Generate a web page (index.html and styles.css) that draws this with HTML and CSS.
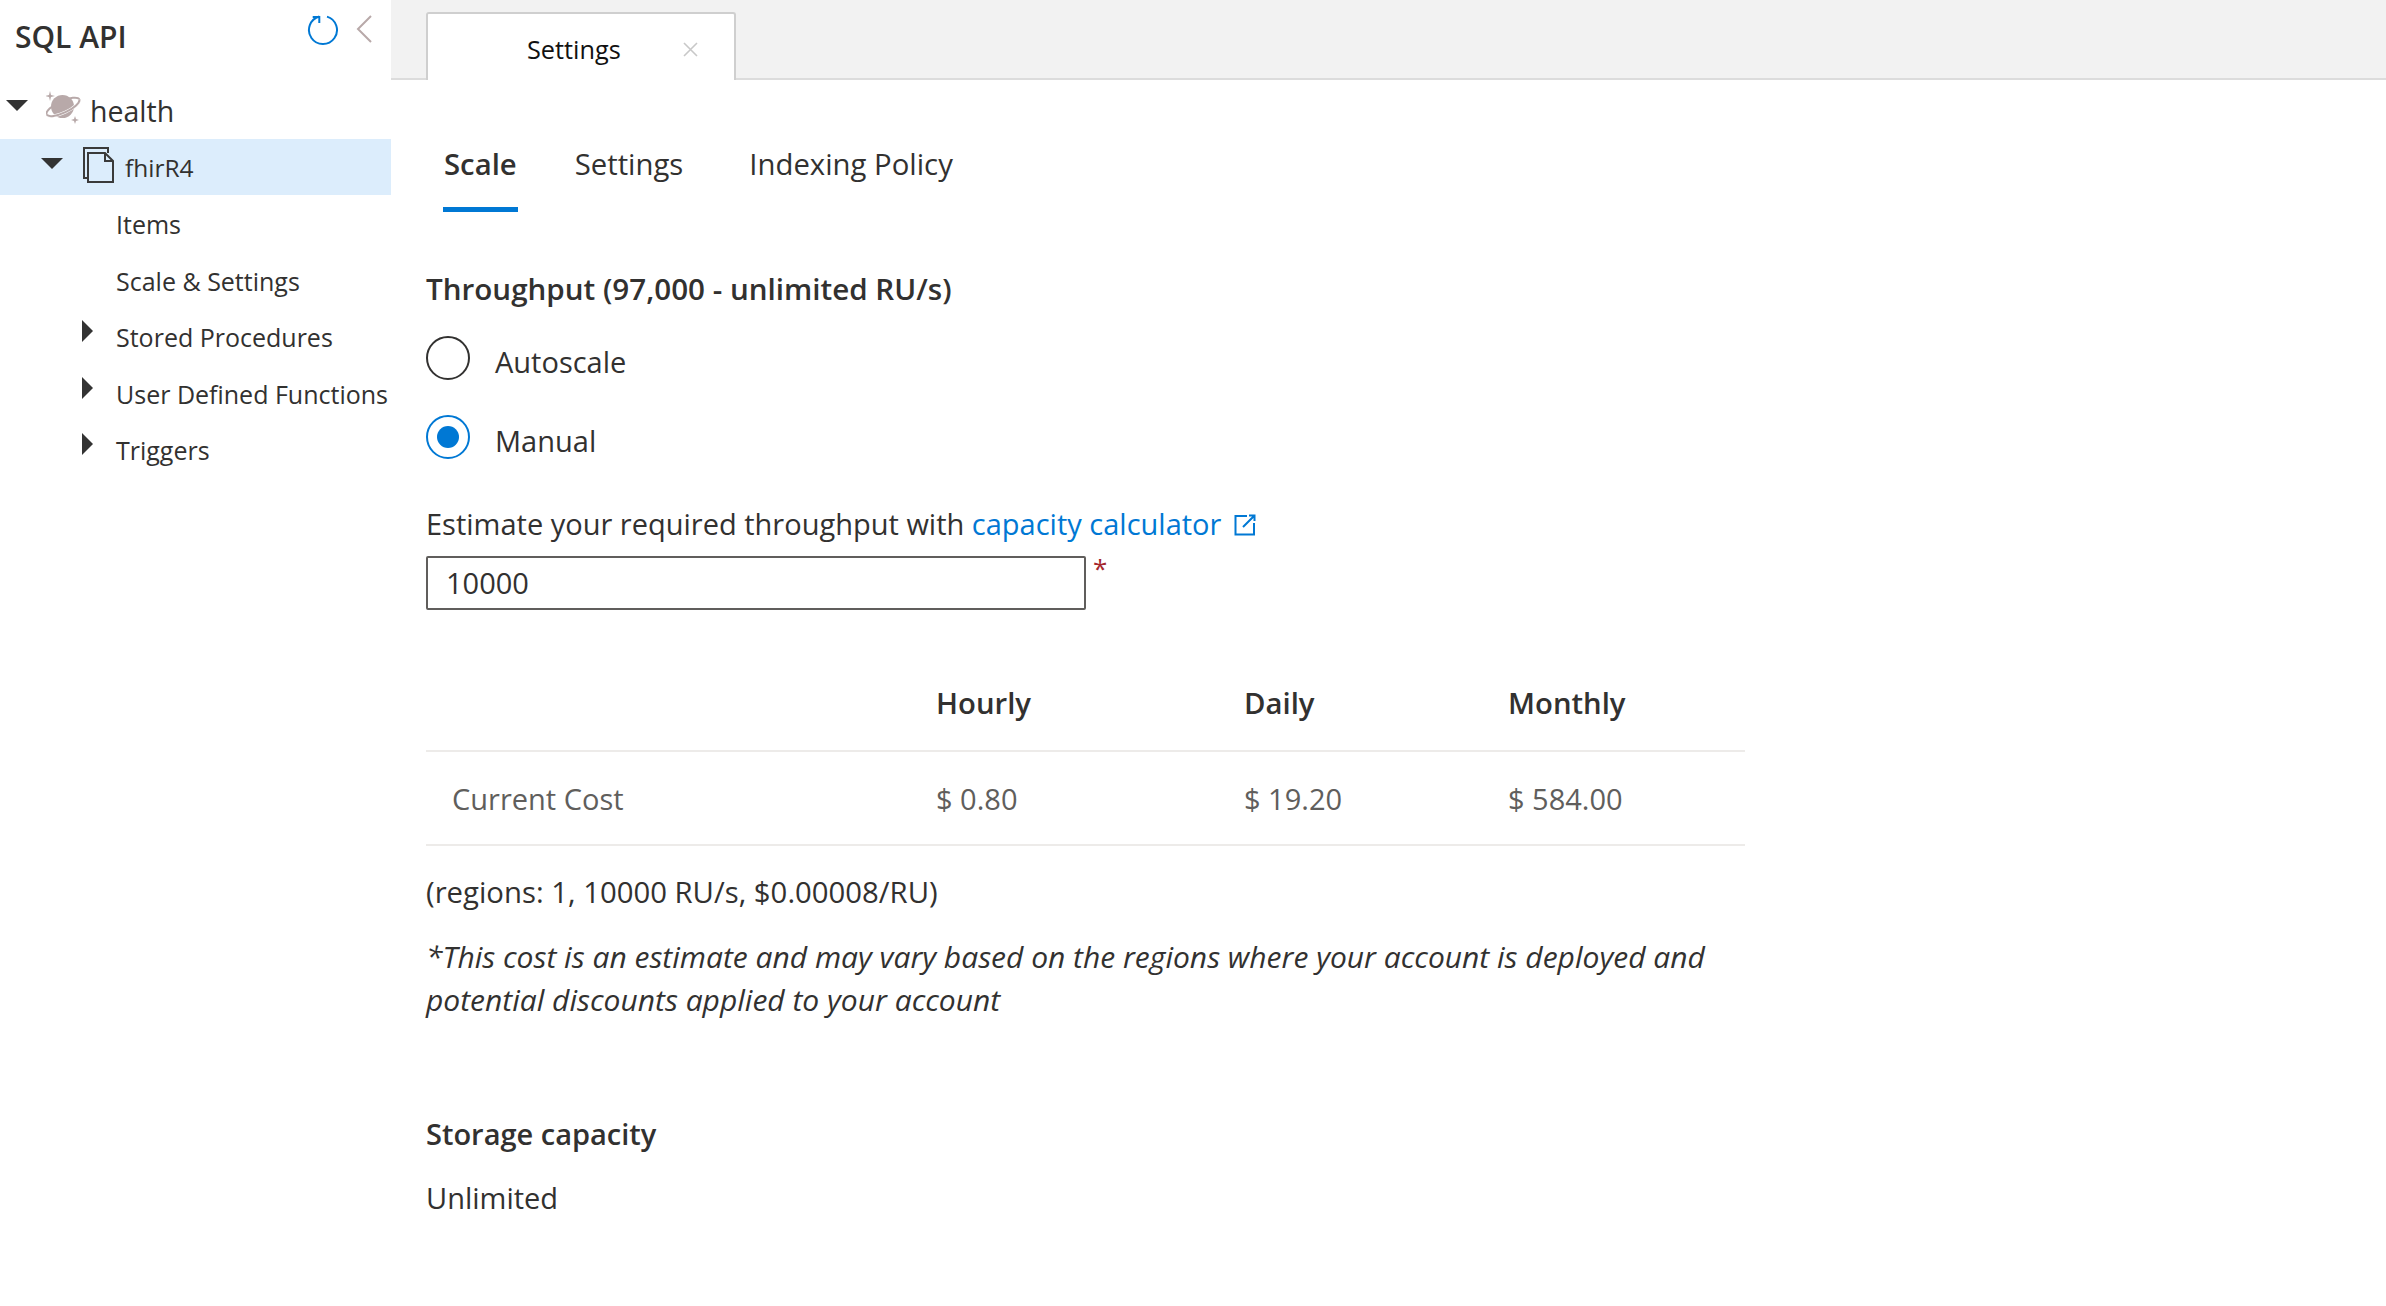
FILE: index.html
```html
<!DOCTYPE html>
<html lang="en">
<head>
    <meta charset="UTF-8">
    <meta name="viewport" content="width=device-width, initial-scale=1.0">
    <title>Scale &amp; Settings</title>
    <link rel="stylesheet" href="styles.css">
</head>
<body>
    <aside class="sidebar">
        <div class="side-head">
            <span class="side-title">SQL API</span>
            <svg class="refresh" width="32" height="32" viewBox="0 0 32 32" fill="none" stroke="#0078d4" stroke-width="2"><path d="M20 2.600 A14 14 0 1 1 12.300 2.500"/><path d="M5.700 3 H12.300 V9"/></svg>
            <svg class="collapse" width="18" height="30" viewBox="0 0 18 30" fill="none" stroke="#b8a9a9" stroke-width="2"><path d="M15 2 L2 15 L15 28"/></svg>
        </div>
        <div class="tree-row db">
            <span class="arrow-down"></span>
            <svg class="planet" width="36" height="34" viewBox="0 0 36 34">
                <path d="M4 0 L5 4 L9 5 L5 6 L4 10 L3 6 L-1 5 L3 4Z M29 25 L30 28 L33 29 L30 30 L29 33 L28 30 L25 29 L28 28Z" fill="#b8a9a9"/>
                <ellipse cx="17" cy="16" rx="18" ry="6" transform="rotate(-25 17 16)" fill="none" stroke="#b8a9a9" stroke-width="2"/>
                <circle cx="16.500" cy="15.500" r="11.500" fill="#b8a9a9"/>
                <path d="M33.300 8.400 A18 6 -25 0 1 0.700 23.600" fill="none" stroke="#fff" stroke-width="3"/>
                <path d="M33.300 8.400 A18 6 -25 0 1 0.700 23.600" fill="none" stroke="#b8a9a9" stroke-width="2"/>
            </svg>
            <span>health</span>
        </div>
        <div class="tree-row coll selected">
            <span class="arrow-down"></span>
            <svg class="doc" width="32" height="36" viewBox="0 0 32 36" fill="none" stroke="#3a3a3a" stroke-width="2"><path d="M5 31 H1 V1 H25 V6"/><path d="M5 6 H22 L30 14 V35 H5Z"/><path d="M22 6 V14 H30"/></svg>
            <span>fhirR4</span>
        </div>
        <div class="tree-row leaf">Items</div>
        <div class="tree-row leaf">Scale &amp; Settings</div>
        <div class="tree-row leaf"><span class="arrow-right"></span>Stored Procedures</div>
        <div class="tree-row leaf"><span class="arrow-right"></span>User Defined Functions</div>
        <div class="tree-row leaf"><span class="arrow-right"></span>Triggers</div>
    </aside>

    <main class="main">
        <div class="tabbar">
            <div class="tab">
                <span>Settings</span>
                <svg class="tab-close" width="15" height="15" viewBox="0 0 15 15" stroke="#c8c8c8" stroke-width="1.6"><path d="M1 1 L14 14 M14 1 L1 14"/></svg>
            </div>
        </div>

        <div class="content">
            <nav class="pivot">
                <span class="pivot-item active">Scale</span>
                <span class="pivot-item second">Settings</span>
                <span class="pivot-item third">Indexing Policy</span>
            </nav>

            <h3 class="label throughput">Throughput (97,000 - unlimited RU/s)</h3>
            <div class="radio-row first"><span class="radio"></span><span class="radio-text">Autoscale</span></div>
            <div class="radio-row"><span class="radio on"></span><span class="radio-text">Manual</span></div>

            <p class="estimate">Estimate your required throughput with <a class="link">capacity calculator <svg width="22" height="22" viewBox="0 0 22 22" fill="none" stroke="#0078d4" stroke-width="2"><path d="M13 2 H1.500 V20.500 H20 V9"/><path d="M15 1.500 H20.500 V7 M20.500 1.500 L9 13"/></svg></a></p>
            <div class="input-row">
                <div class="input">10000</div>
                <span class="required">*</span>
            </div>

            <table class="cost">
                <thead>
                    <tr><th class="c1"></th><th class="c2">Hourly</th><th class="c3">Daily</th><th>Monthly</th></tr>
                </thead>
                <tbody>
                    <tr><td>Current Cost</td><td>$ 0.80</td><td>$ 19.20</td><td>$ 584.00</td></tr>
                </tbody>
            </table>

            <p class="regions">(regions: 1, 10000 RU/s, $0.00008/RU)</p>
            <p class="note">*This cost is an estimate and may vary based on the regions where your account is deployed and potential discounts applied to your account</p>

            <h3 class="label storage">Storage capacity</h3>
            <p class="unlimited">Unlimited</p>
        </div>
    </main>
</body>
</html>
```

FILE: styles.css
```css
* {
    box-sizing: border-box;
}
body {
    margin: 0;
    height: 1306px;
    display: flex;
    overflow: hidden;
    background: white;
    color: #323130;
    font-family: "Open Sans", "Noto Sans", sans-serif;
    font-size: 29px;
}

/* left tree */
.sidebar {
    width: 391px;
    flex: none;
}
.side-head {
    height: 79px;
    display: flex;
    align-items: center;
    position: relative;
    padding: 0 0 7px 15px;
}
.side-title {
    font-size: 30px;
    font-weight: 600;
}
.refresh {
    position: absolute;
    left: 307px;
    top: 14px;
}
.collapse {
    position: absolute;
    left: 356px;
    top: 14px;
}
.tree-row {
    display: flex;
    align-items: center;
    position: relative;
    height: 57px;
}
.db {
    height: 60px;
    font-size: 28.500px;
    padding: 4px 0 0 46px;
}
.planet {
    margin-right: 8px;
    margin-bottom: 6px;
}
.coll {
    font-size: 24.500px;
    padding-left: 83px;
}
.doc {
    margin-right: 10px;
    margin-bottom: 4px;
}
.selected {
    background: #dcedfc;
    height: 56px;
}
.leaf {
    font-size: 25px;
    padding: 2px 0 0 116px;
    height: 56.500px;
}
.arrow-down {
    position: absolute;
    left: 6px;
    top: 21px;
    border-left: 11px solid transparent;
    border-right: 11px solid transparent;
    border-top: 11px solid #333;
}
.coll .arrow-down {
    left: 41px;
    top: 19px;
}
.arrow-right {
    position: absolute;
    left: 82px;
    top: 12px;
    border-top: 11px solid transparent;
    border-bottom: 11px solid transparent;
    border-left: 11px solid #333;
}

/* right side */
.main {
    flex: 1;
}
.tabbar {
    height: 80px;
    background: #f2f2f2;
    border-bottom: 2px solid #dcdcdc;
    padding: 12px 0 0 35px;
}
.tab {
    width: 310px;
    height: 68px;
    background: white;
    border: 2px solid #cfcfcf;
    border-bottom: none;
    border-radius: 3px 3px 0 0;
    font-size: 25.300px;
    color: #111;
    display: flex;
    align-items: center;
    padding: 4px 0 0 99px;
}
.tab-close {
    margin-left: 62px;
}
.content {
    padding-left: 35px;
    width: 1390px;
}
.pivot {
    display: flex;
    height: 132px;
    padding-top: 45px;
    font-size: 29.300px;
}
.pivot-item {
    height: 87px;
    line-height: 78px;
}
.pivot-item.active {
    font-weight: 600;
    border-bottom: 5px solid #0078d4;
    padding: 0 1px;
    margin-left: 17px;
}
.second {
    margin-left: 57px;
}
.third {
    margin-left: 66px;
}
.label {
    margin: 0;
    font-size: 29.600px;
    font-weight: 600;
    line-height: 40px;
}
.throughput {
    margin-top: 57px;
}
.radio-row {
    display: flex;
    align-items: center;
    height: 44px;
    gap: 25px;
    margin-top: 35px;
}
.radio-row.first {
    margin-top: 27px;
}
.radio-text {
    padding-top: 6px;
}
.radio {
    width: 44px;
    height: 44px;
    border-radius: 50%;
    border: 2px solid #323130;
    flex: none;
}
.radio.on {
    border-color: #0078d4;
    position: relative;
}
.radio.on::after {
    content: "";
    position: absolute;
    left: 9px;
    top: 9px;
    width: 22px;
    height: 22px;
    border-radius: 50%;
    background: #0078d4;
}
.estimate {
    margin: 45px 0 0;
    line-height: 40px;
}
.link {
    color: #0078d4;
}
.link svg {
    margin-left: 5px;
    vertical-align: -1px;
}
.input-row {
    display: flex;
    margin-top: 12px;
}
.input {
    width: 660px;
    height: 54px;
    border: 2px solid #605e5c;
    border-radius: 2px;
    padding-left: 18px;
    line-height: 50px;
}
.required {
    color: #a4262c;
    margin-left: 7px;
    font-size: 26px;
    line-height: 24px;
}
.cost {
    border-collapse: collapse;
    table-layout: fixed;
    width: 1319px;
    margin-top: 47px;
}
.cost th,
.cost td {
    text-align: left;
    padding: 0 0 0 26px;
    border-bottom: 2px solid #edebe9;
}
.cost th {
    height: 94px;
    padding-bottom: 2px;
    font-weight: 600;
    font-size: 29.300px;
}
.cost td {
    height: 94px;
    color: #605e5c;
}
.c1 {
    width: 484px;
}
.c2 {
    width: 308px;
}
.c3 {
    width: 264px;
}
.regions {
    margin: 26px 0 0;
    line-height: 40px;
    font-size: 29.300px;
}
.note {
    width: 1319px;
    margin: 23px 0 0;
    font-size: 30px;
    font-style: italic;
    line-height: 43px;
}
.label.storage {
    margin-top: 93px;
    font-size: 29px;
}
.unlimited {
    margin: 24px 0 0;
    line-height: 40px;
}
```
